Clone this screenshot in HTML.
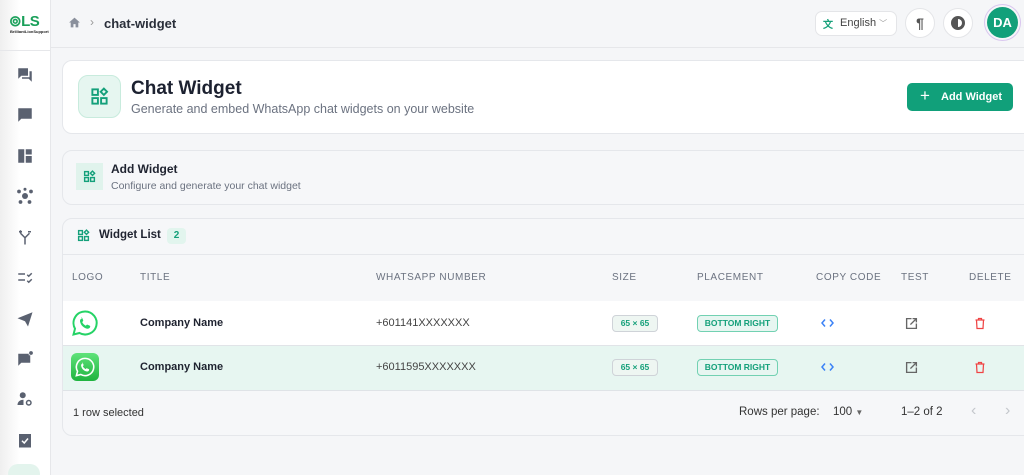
<!DOCTYPE html><html><head><meta charset="utf-8"><style>
*{box-sizing:border-box;margin:0;padding:0}
html,body{width:1024px;height:475px;overflow:hidden}
body{background:#f5f6f8;font-family:"Liberation Sans",sans-serif;color:#1f2330;position:relative}
.a{position:absolute}
.side{left:0;top:0;width:51px;height:475px;background:linear-gradient(90deg,#efefef,#fff 40%);border-right:1px solid #e6e7ea}
.ic{position:absolute;left:16px;width:18px;height:18px}
.card{position:absolute;border:1px solid #e5e7eb;border-radius:10px}
.th{position:absolute;top:272px;font-size:10px;letter-spacing:0.6px;color:#6b7280}
.chip{position:absolute;height:17px;border:1px solid;border-radius:4px;font-size:8.5px;font-weight:bold;line-height:15px;text-align:center}
</style></head><body>
<div class="a side">
<div class="a" style="left:9px;top:12px;font-weight:bold;font-size:15px;color:#1aa05a;letter-spacing:-0.5px">⊚LS</div>
<div class="a" style="left:10px;top:29px;font-size:4px;color:#222;font-weight:bold">BrilliantLionSupport</div>
<div class="a" style="left:0;top:50px;width:51px;border-top:1px solid #e6e7ea"></div>
<svg class="ic" style="top:66px" viewBox="0 0 24 24" fill="#5a6170"><path d="M3 3h13v10H7l-4 4zM18 7h3v14l-4-4H8v-2h10z"/></svg>
<svg class="ic" style="top:106px" viewBox="0 0 24 24" fill="#5a6170"><path d="M3 3h18v14H7l-4 4zM7 13l6-6 2 2-6 6H7z"/></svg>
<svg class="ic" style="top:147px" viewBox="0 0 24 24" fill="#5a6170"><path d="M3 3h8v18H3zM13 3h8v7h-8zM13 12h8v9h-8z"/></svg>
<svg class="ic" style="top:187px" viewBox="0 0 24 24" fill="#5a6170"><circle cx="12" cy="12" r="4"/><circle cx="4" cy="6" r="2.5"/><circle cx="20" cy="6" r="2.5"/><circle cx="6" cy="20" r="2.5"/><circle cx="18" cy="20" r="2.5"/><circle cx="12" cy="3" r="2"/></svg>
<svg class="ic" style="top:228px" viewBox="0 0 24 24" fill="none" stroke="#5a6170" stroke-width="2"><path d="M12 22v-9l-6-6M12 13l6-6M4 5h4M6 3v4M16 5h4"/></svg>
<svg class="ic" style="top:268px" viewBox="0 0 24 24" fill="none" stroke="#5a6170" stroke-width="2"><path d="M3 8h9M3 16h9M15 9l2 2 4-4M15 17l2 2 4-4"/></svg>
<svg class="ic" style="top:310px" viewBox="0 0 24 24" fill="#5a6170"><path d="M2 11l20-8-6 19-4-7z"/></svg>
<svg class="ic" style="top:350px" viewBox="0 0 24 24" fill="#5a6170"><path d="M3 5h14v2h2v10H7l-4 4z"/><circle cx="20" cy="4" r="2.5"/></svg>
<svg class="ic" style="top:390px" viewBox="0 0 24 24" fill="#5a6170"><circle cx="9" cy="7" r="4"/><path d="M2 20c0-4 3-7 8-7v7z"/><circle cx="17" cy="17" r="3" fill="none" stroke="#5a6170" stroke-width="2"/></svg>
<svg class="ic" style="top:431px" viewBox="0 0 24 24" fill="#5a6170"><path d="M4 4h16v18H4z"/><path d="M8 13l3 3 5-6" stroke="#fff" stroke-width="2" fill="none"/></svg>
<div class="a" style="left:8px;top:464px;width:32px;height:20px;border-radius:10px;background:#e3f4ed"></div>
</div>
<div class="a" style="left:51px;top:47px;width:973px;border-top:1px solid #e6e7ea"></div>
<svg class="a" style="left:68px;top:16px" width="13" height="13" viewBox="0 0 24 24" fill="#8a909c"><path d="M12 3l10 9h-3v9h-5v-6h-4v6H5v-9H2z"/></svg>
<div class="a" style="left:90px;top:15px;color:#999;font-size:12px">›</div>
<div class="a" style="left:104px;top:16px;font-size:13px;font-weight:bold;color:#2a2f3a">chat-widget</div>
<div class="a" style="left:815px;top:11px;width:82px;height:25px;border:1px solid #e4e5e8;border-radius:7px;background:#fff;font-size:11px;color:#444;line-height:23px;padding-left:24px">English <span style="font-size:8px;color:#999">﹀</span></div>
<div class="a" style="left:823px;top:16px;font-size:10px;color:#17a07a;font-weight:bold">文</div>
<div class="a" style="left:905px;top:8px;width:30px;height:30px;border-radius:50%;background:#fff;border:1px solid #e4e5e8;text-align:center;line-height:28px;font-weight:bold;color:#555;font-size:14px">¶</div>
<div class="a" style="left:943px;top:8px;width:30px;height:30px;border-radius:50%;background:#fff;border:1px solid #e4e5e8"></div>
<div class="a" style="left:951px;top:16px;width:14px;height:14px;border-radius:50%;background:#555;border:3px solid #555"><div style="margin-left:4px;width:4px;height:8px;background:#fff;border-radius:0 4px 4px 0"></div></div>
<div class="a" style="left:984px;top:4px;width:37px;height:37px;border-radius:50%;border:1px solid #d9c6ef;padding:2px"><div style="width:31px;height:31px;border-radius:50%;background:#12a07a;color:#fff;font-weight:bold;font-size:13px;text-align:center;line-height:31px">DA</div></div>

<div class="card" style="left:62px;top:60px;width:980px;height:74px;background:#fff"></div>
<div class="a" style="left:78px;top:75px;width:43px;height:43px;border-radius:10px;background:#e6f6f0;border:1px solid #c8ebdd"></div>
<svg class="a" style="left:90px;top:87px" width="19" height="19" viewBox="0 0 24 24" fill="none" stroke="#14a07a" stroke-width="2.4"><rect x="3" y="3" width="7" height="7"/><rect x="3" y="14" width="7" height="7"/><rect x="14" y="14" width="7" height="7"/><path d="M17.5 2l4 4-4 4-4-4z"/></svg>
<div class="a" style="left:131px;top:78px;font-size:19px;font-weight:bold;color:#1c2130">Chat Widget</div>
<div class="a" style="left:131px;top:102px;font-size:12.5px;color:#6b7280">Generate and embed WhatsApp chat widgets on your website</div>
<div class="a" style="left:907px;top:83px;width:106px;height:28px;border-radius:5px;background:#11a07a;color:#fff;font-size:11px;font-weight:bold;line-height:28px;padding-left:34px">Add Widget</div>
<div class="a" style="left:920px;top:83px;color:#fff;font-size:17px;line-height:26px">+</div>

<div class="card" style="left:62px;top:150px;width:980px;height:55px;background:#f6f7f9"></div>
<div class="a" style="left:76px;top:163px;width:27px;height:27px;background:#e0f3ec"></div>
<svg class="a" style="left:83px;top:170px" width="13" height="13" viewBox="0 0 24 24" fill="none" stroke="#14a07a" stroke-width="2.6"><rect x="3" y="3" width="7" height="7"/><rect x="3" y="14" width="7" height="7"/><rect x="14" y="14" width="7" height="7"/><path d="M17.5 2l4 4-4 4-4-4z"/></svg>
<div class="a" style="left:111px;top:162px;font-size:12px;font-weight:bold">Add Widget</div>
<div class="a" style="left:111px;top:180px;font-size:10.5px;color:#6b7280">Configure and generate your chat widget</div>

<div class="card" style="left:62px;top:218px;width:980px;height:218px;background:#f6f7f9;overflow:hidden">
<div class="a" style="left:0;top:35px;width:980px;border-top:1px solid #e5e7eb"></div>
<div class="a" style="left:0;top:82px;width:980px;height:45px;background:#fff;border-bottom:1px solid #e1e4e8"></div>
<div class="a" style="left:0;top:127px;width:980px;height:45px;background:#e7f6f1;border-bottom:1px solid #dfe3e7"></div>
</div>
<svg class="a" style="left:77px;top:229px" width="13" height="13" viewBox="0 0 24 24" fill="none" stroke="#14a07a" stroke-width="2.6"><rect x="3" y="3" width="7" height="7"/><rect x="3" y="14" width="7" height="7"/><rect x="14" y="14" width="7" height="7"/><path d="M17.5 2l4 4-4 4-4-4z"/></svg>
<div class="a" style="left:99px;top:229px;font-size:11.5px;font-weight:bold">Widget List</div>
<div class="a" style="left:167px;top:228px;width:19px;height:16px;border-radius:4px;background:#e2f5ee;color:#14a07a;font-size:10px;font-weight:bold;text-align:center;line-height:16px">2</div>
<div class="th" style="left:72px">LOGO</div>
<div class="th" style="left:140px">TITLE</div>
<div class="th" style="left:376px">WHATSAPP NUMBER</div>
<div class="th" style="left:612px">SIZE</div>
<div class="th" style="left:697px">PLACEMENT</div>
<div class="th" style="left:816px">COPY CODE</div>
<div class="th" style="left:901px">TEST</div>
<div class="th" style="left:969px">DELETE</div>

<svg class="a" style="left:71px;top:309px" width="28" height="28" viewBox="0 0 28 28"><path d="M14 2.5a11.5 11.5 0 0 0-10 17.2L2.5 25.5l6-1.5A11.5 11.5 0 1 0 14 2.5z" fill="#fff" stroke="#25d366" stroke-width="2"/><path d="M10 8.5c.6 0 1 .1 1.3.8l.9 2c.1.4 0 .7-.3 1l-.7.8c.8 1.6 2 2.8 3.6 3.6l.8-.8c.3-.3.6-.4 1-.2l2 .9c.6.3.7.6.6 1.2-.2 1.2-1.4 2-2.6 1.9-3.9-.5-7-3.6-7.6-7.5-.1-1.3.7-2.5 2-2.7z" fill="#25d366"/></svg>
<div class="a" style="left:71px;top:353px;width:28px;height:28px;border-radius:6px;background:linear-gradient(#5fe37a,#1fb33f)"></div>
<svg class="a" style="left:74px;top:356px" width="22" height="22" viewBox="0 0 28 28"><path d="M14 3a11 11 0 0 0-9.5 16.5L3 25l5.6-1.5A11 11 0 1 0 14 3z" fill="none" stroke="#fff" stroke-width="2"/><path d="M10 8.5c.6 0 1 .1 1.3.8l.9 2c.1.4 0 .7-.3 1l-.7.8c.8 1.6 2 2.8 3.6 3.6l.8-.8c.3-.3.6-.4 1-.2l2 .9c.6.3.7.6.6 1.2-.2 1.2-1.4 2-2.6 1.9-3.9-.5-7-3.6-7.6-7.5-.1-1.3.7-2.5 2-2.7z" fill="#fff"/></svg>

<div class="a" style="left:140px;top:317px;font-size:11px;font-weight:bold">Company Name</div>
<div class="a" style="left:140px;top:361px;font-size:11px;font-weight:bold">Company Name</div>
<div class="a" style="left:376px;top:317px;font-size:11px;color:#444">+601141XXXXXXX</div>
<div class="a" style="left:376px;top:361px;font-size:11px;color:#444">+6011595XXXXXXX</div>
<div class="chip" style="left:612px;top:315px;width:46px;border-color:#cfd3d8;color:#14a07a;background:#eef6f2">65 × 65</div>
<div class="chip" style="left:612px;top:359px;width:46px;border-color:#cfd3d8;color:#14a07a;background:#eef6f2">65 × 65</div>
<div class="chip" style="left:697px;top:315px;width:81px;border-color:#72d1b2;color:#14a07a;background:#e7f6f1">BOTTOM RIGHT</div>
<div class="chip" style="left:697px;top:359px;width:81px;border-color:#72d1b2;color:#14a07a;background:#e7f6f1">BOTTOM RIGHT</div>
<svg class="a" style="left:821px;top:318px" width="13" height="10" viewBox="0 0 26 20" fill="none" stroke="#3b82f6" stroke-width="3"><path d="M8 3L2 10l6 7M18 3l6 7-6 7"/></svg>
<svg class="a" style="left:821px;top:362px" width="13" height="10" viewBox="0 0 26 20" fill="none" stroke="#3b82f6" stroke-width="3"><path d="M8 3L2 10l6 7M18 3l6 7-6 7"/></svg>
<svg class="a" style="left:905px;top:317px" width="13" height="13" viewBox="0 0 24 24" fill="none" stroke="#666" stroke-width="2.5"><path d="M12 3H3v18h18v-9M14 3h7v7M21 3L10 14"/></svg>
<svg class="a" style="left:905px;top:361px" width="13" height="13" viewBox="0 0 24 24" fill="none" stroke="#666" stroke-width="2.5"><path d="M12 3H3v18h18v-9M14 3h7v7M21 3L10 14"/></svg>
<svg class="a" style="left:974px;top:317px" width="12" height="13" viewBox="0 0 24 24" fill="none" stroke="#ef4444" stroke-width="2.5"><path d="M3 5h18M9 5V2h6v3M5 5l1 17h12l1-17"/></svg>
<svg class="a" style="left:974px;top:361px" width="12" height="13" viewBox="0 0 24 24" fill="none" stroke="#ef4444" stroke-width="2.5"><path d="M3 5h18M9 5V2h6v3M5 5l1 17h12l1-17"/></svg>

<div class="a" style="left:73px;top:407px;font-size:11px;color:#333">1 row selected</div>
<div class="a" style="left:739px;top:406px;font-size:11.5px;color:#333">Rows per page:</div>
<div class="a" style="left:833px;top:406px;font-size:11.5px;color:#333">100 <span style="font-size:8px;color:#666">▼</span></div>
<div class="a" style="left:901px;top:406px;font-size:11.5px;color:#333">1–2 of 2</div>
<div class="a" style="left:971px;top:402px;font-size:16px;color:#c4c7cc">‹</div>
<div class="a" style="left:1005px;top:402px;font-size:16px;color:#c4c7cc">›</div>
</body></html>
